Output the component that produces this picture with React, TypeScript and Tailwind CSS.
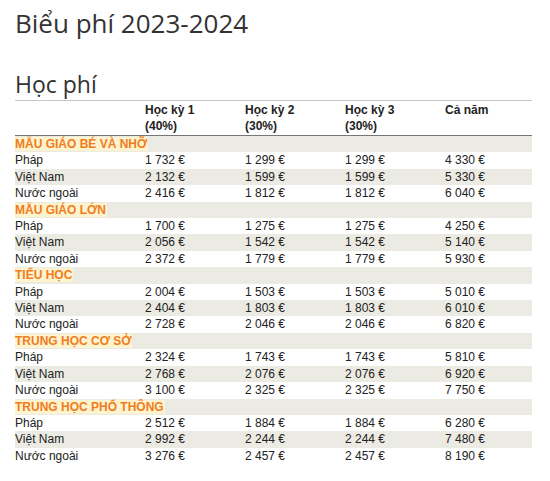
const sections = [
  {
    name: "MẪU GIÁO BÉ VÀ NHỠ",
    rows: [
      ["Pháp", "1 732 €", "1 299 €", "1 299 €", "4 330 €"],
      ["Việt Nam", "2 132 €", "1 599 €", "1 599 €", "5 330 €"],
      ["Nước ngoài", "2 416 €", "1 812 €", "1 812 €", "6 040 €"],
    ],
  },
  {
    name: "MẪU GIÁO LỚN",
    rows: [
      ["Pháp", "1 700 €", "1 275 €", "1 275 €", "4 250 €"],
      ["Việt Nam", "2 056 €", "1 542 €", "1 542 €", "5 140 €"],
      ["Nước ngoài", "2 372 €", "1 779 €", "1 779 €", "5 930 €"],
    ],
  },
  {
    name: "TIỂU HỌC",
    rows: [
      ["Pháp", "2 004 €", "1 503 €", "1 503 €", "5 010 €"],
      ["Việt Nam", "2 404 €", "1 803 €", "1 803 €", "6 010 €"],
      ["Nước ngoài", "2 728 €", "2 046 €", "2 046 €", "6 820 €"],
    ],
  },
  {
    name: "TRUNG HỌC CƠ SỞ",
    rows: [
      ["Pháp", "2 324 €", "1 743 €", "1 743 €", "5 810 €"],
      ["Việt Nam", "2 768 €", "2 076 €", "2 076 €", "6 920 €"],
      ["Nước ngoài", "3 100 €", "2 325 €", "2 325 €", "7 750 €"],
    ],
  },
  {
    name: "TRUNG HỌC PHỔ THÔNG",
    rows: [
      ["Pháp", "2 512 €", "1 884 €", "1 884 €", "6 280 €"],
      ["Việt Nam", "2 992 €", "2 244 €", "2 244 €", "7 480 €"],
      ["Nước ngoài", "3 276 €", "2 457 €", "2 457 €", "8 190 €"],
    ],
  },
];

export default function App() {
  return (
    <div className="min-h-[481px] bg-white px-[15px] pt-[5px] text-[#333]">
      <h1 className="text-[26px] leading-[36px] font-normal text-[#333] font-['Open_Sans',sans-serif]">
        Biểu phí 2023-2024
      </h1>
      <h2 className="mt-[28px] text-[23px] leading-[31px] font-normal text-[#333] font-['Open_Sans',sans-serif]">
        Học phí
      </h2>
      <table className="w-[517px] border-collapse text-[12px] leading-[16.4px] font-['Liberation_Sans',Arial,sans-serif] text-[#222]">
        <colgroup>
          <col className="w-[130px]" />
          <col className="w-[100px]" />
          <col className="w-[100px]" />
          <col className="w-[100px]" />
          <col className="w-[87px]" />
        </colgroup>
        <thead>
          <tr className="border-t border-[#c8c8c8] border-b border-b-[#777]">
            <th className="p-0" />
            <th className="px-0 pt-[2px] pb-[1px] text-left align-top font-bold leading-[15.5px]">
              Học kỳ 1<br />(40%)
            </th>
            <th className="px-0 pt-[2px] pb-[1px] text-left align-top font-bold leading-[15.5px]">
              Học kỳ 2<br />(30%)
            </th>
            <th className="px-0 pt-[2px] pb-[1px] text-left align-top font-bold leading-[15.5px]">
              Học kỳ 3<br />(30%)
            </th>
            <th className="px-0 pt-[2px] pb-[1px] text-left align-top font-bold leading-[15.5px]">
              Cả năm
            </th>
          </tr>
        </thead>
        <tbody>
          {sections.map((s) => (
            <Section key={s.name} name={s.name} rows={s.rows} />
          ))}
        </tbody>
      </table>
    </div>
  );
}

function Section({ name, rows }: { name: string; rows: string[][] }) {
  return (
    <>
      <tr className="bg-[#ecebe3] h-[16.4px]">
        <td colSpan={5} className="p-0">
          <span className="bg-[#fdf3cf] font-bold text-[#ef7d1e] pr-[1px]">{name}</span>
        </td>
      </tr>
      {rows.map((r, i) => (
        <tr key={r[0]} className={i === 1 ? "bg-[#ecebe3] h-[16.4px]" : "h-[16.4px]"}>
          {r.map((c, j) => (
            <td key={j} className="p-0">
              {c}
            </td>
          ))}
        </tr>
      ))}
    </>
  );
}
